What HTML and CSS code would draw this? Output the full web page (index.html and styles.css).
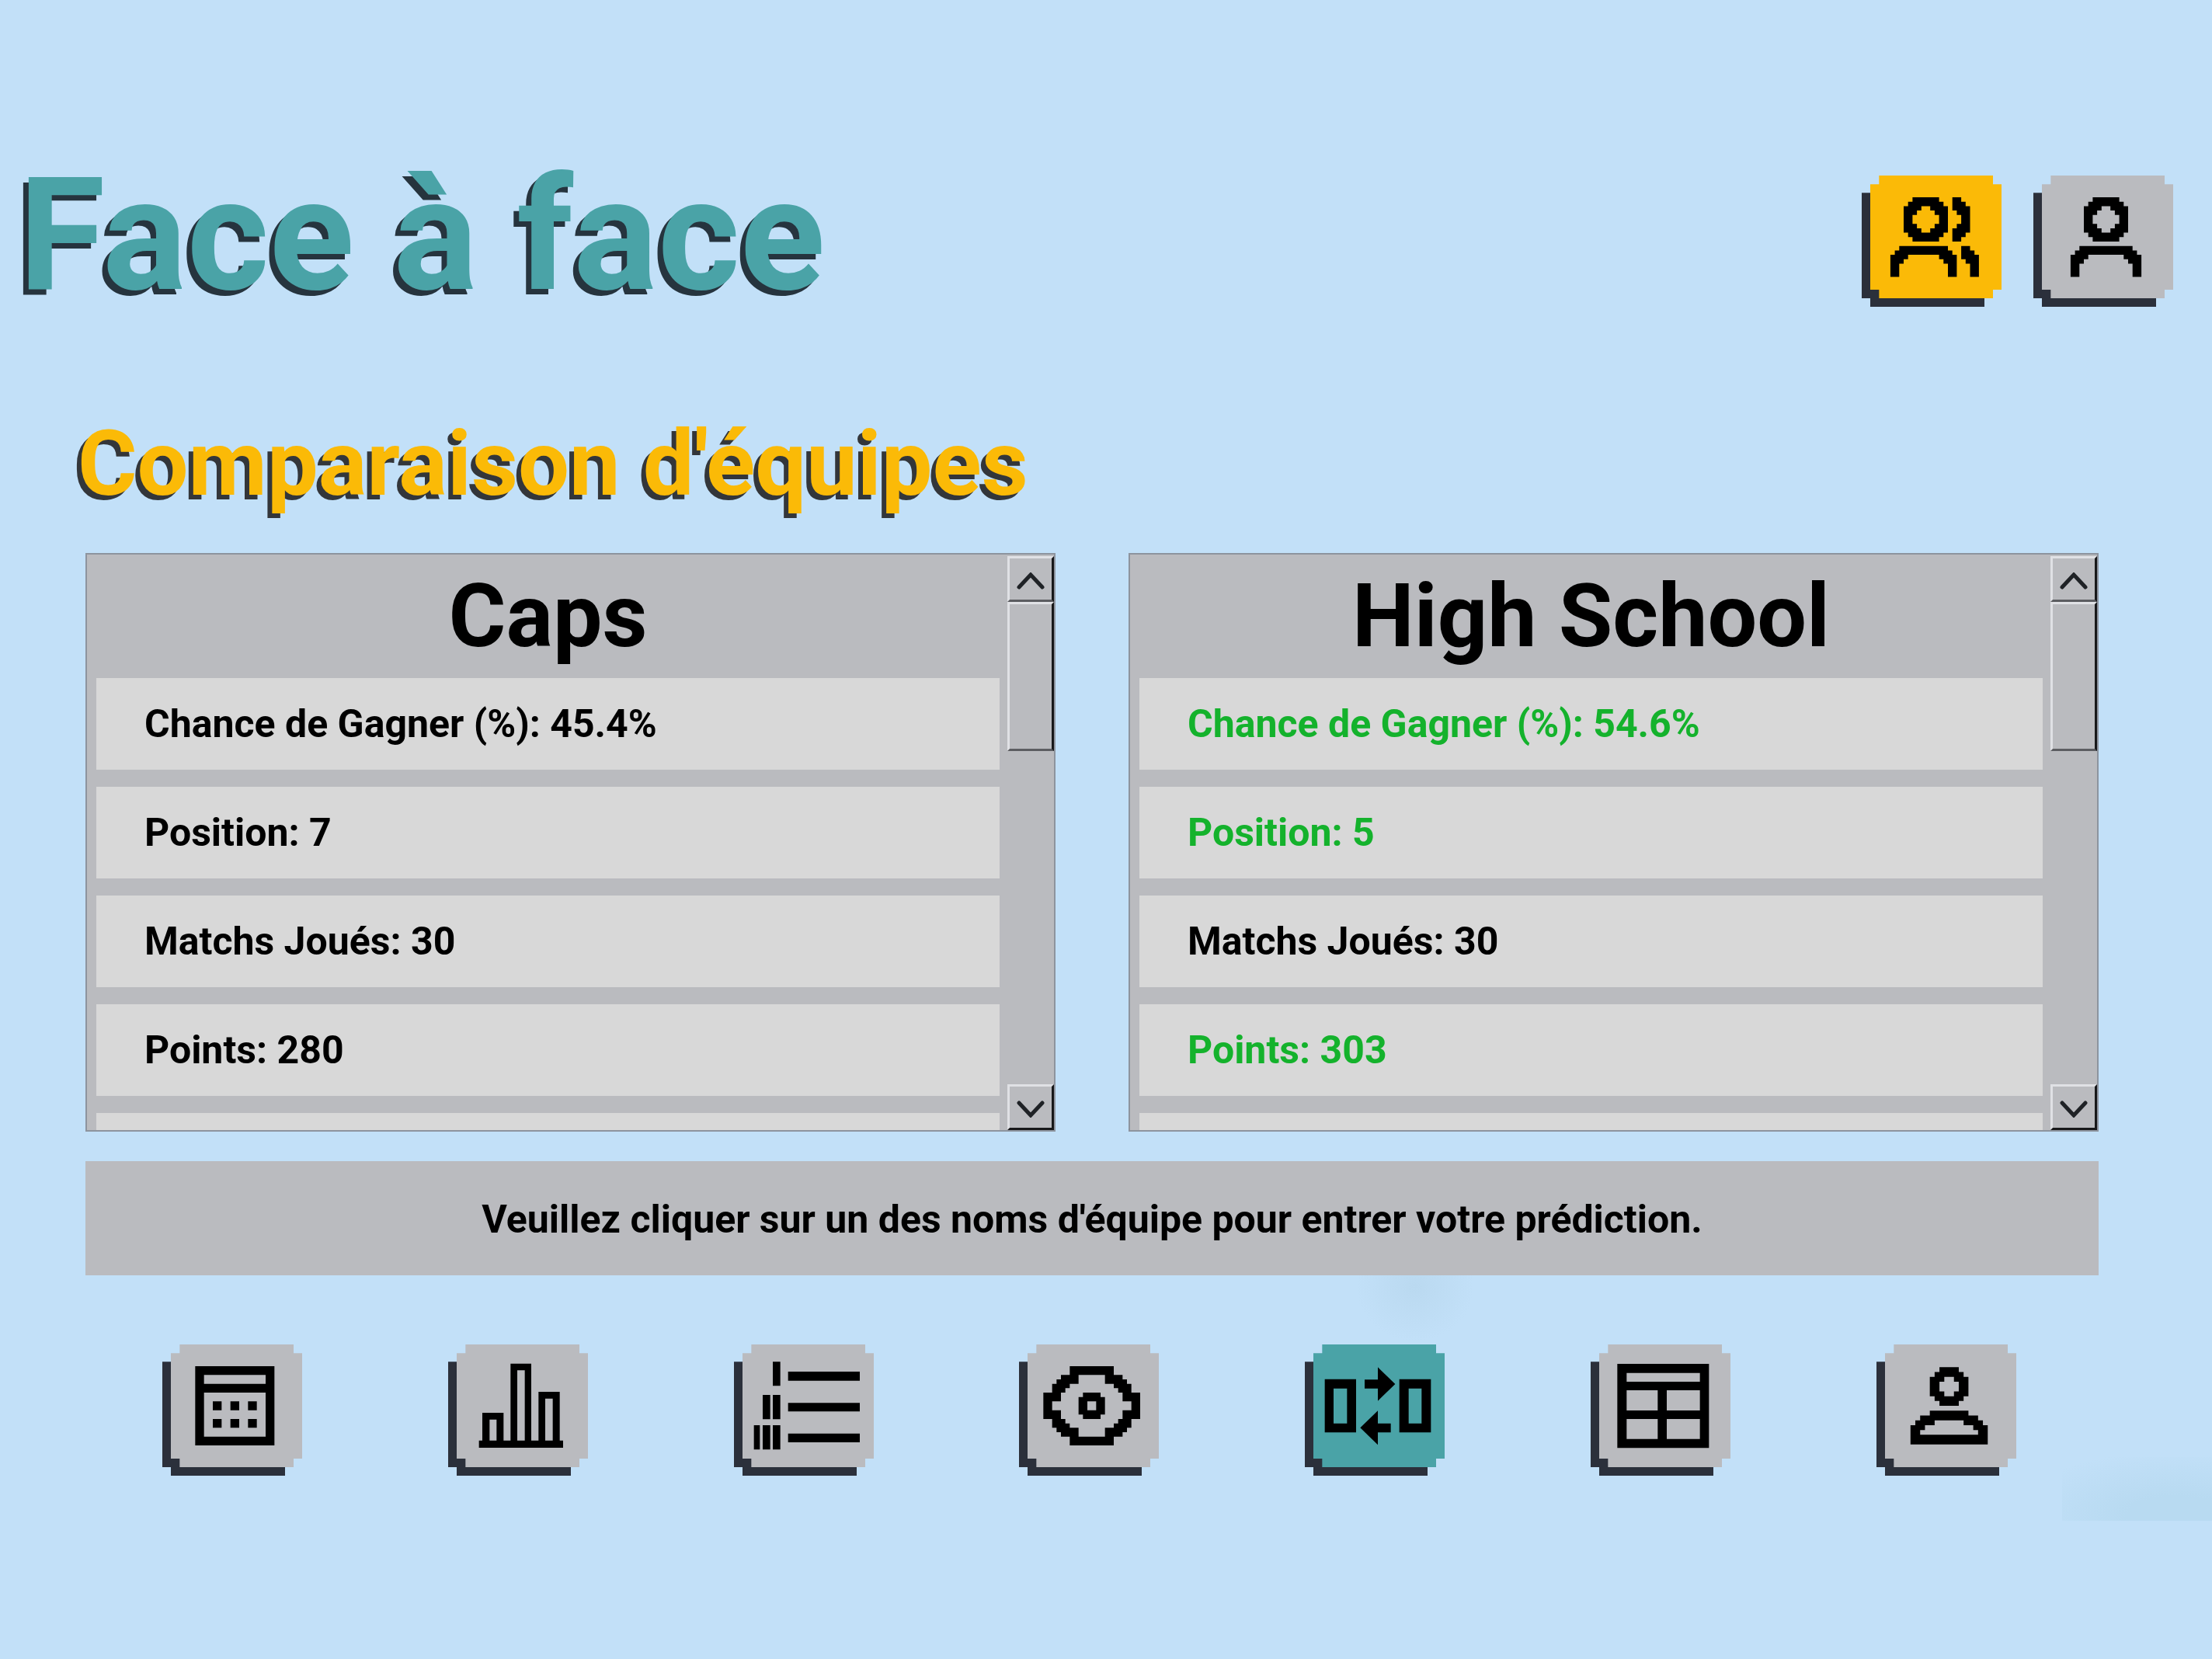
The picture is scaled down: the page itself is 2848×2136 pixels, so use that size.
FILE: index.html
```html
<!DOCTYPE html>
<html lang="fr">
<head>
<meta charset="utf-8">
<meta name="viewport" content="width=device-width, initial-scale=1">
<title>Face à face</title>
<link rel="stylesheet" href="styles.css">
</head>
<body>
<svg class="defs" aria-hidden="true">
  <symbol id="tile" viewBox="0 0 540 507">
    <path class="tile-shadow" d="M0 67H507V474H474V507H33V474H0Z"/>
    <path class="tile-face" d="M67 0H507V34H540V441H507V474H67V441H33V34H67Z"/>
  </symbol>
  <symbol id="chevron" viewBox="0 0 36 22">
    <path d="M3 19L18 3L33 19" fill="none" stroke="#1f2226" stroke-width="5" stroke-linecap="round"/>
  </symbol>
</svg>

<header class="header">
  <h1 class="title">Face à face</h1>
  <div class="modes">
    <button class="tile tile--gold" type="button" aria-label="Équipes" aria-pressed="true">
      <svg viewBox="0 0 540 507"><use href="#tile"/>
        <g transform="translate(162 84) scale(17.1)" fill-rule="evenodd">
          <path d="M2 0H8V1H9V2H10V8H9V9H8V10H2V9H1V8H0V2H1V1H2ZM4 2V3H3V4H2V6H3V7H4V8H6V7H7V6H8V4H7V3H6V2Z"/>
          <path d="M11 0H13V1H14V2H15V8H14V9H13V10H11V7H12V6H13V4H12V3H11Z"/>
          <path d="M-1 11H10V12H11V13H12V18H10V15H9V14H8V13H1V14H0V15H-1V18H-3V13H-2V12H-1Z"/>
          <path d="M13 11H15V12H16V13H17V18H15V15H14V14H13Z"/>
        </g>
      </svg>
    </button>
    <button class="tile" type="button" aria-label="Joueur" aria-pressed="false">
      <svg viewBox="0 0 540 507"><use href="#tile"/>
        <g transform="translate(195 84) scale(17.1)" fill-rule="evenodd">
          <path d="M2 0H8V1H9V2H10V8H9V9H8V10H2V9H1V8H0V2H1V1H2ZM4 2V3H3V4H2V6H3V7H4V8H6V7H7V6H8V4H7V3H6V2Z"/>
          <path d="M-1 11H11V12H12V13H13V18H11V15H10V14H9V13H1V14H0V15H-1V18H-3V13H-2V12H-1Z"/>
        </g>
      </svg>
    </button>
  </div>
</header>

<main>
  <h2 class="subtitle">Comparaison d'équipes</h2>
  <div class="content">
    <div class="panels">
      <section class="panel">
        <div class="panel-body">
          <h3><button class="team" type="button">Caps</button></h3>
          <ul class="stats">
            <li>Chance de Gagner (%): 45.4%</li>
            <li>Position: 7</li>
            <li>Matchs Joués: 30</li>
            <li>Points: 280</li>
            <li></li>
          </ul>
        </div>
        <div class="scrollbar">
          <button class="scroll-part" type="button" aria-label="Monter"><svg><use href="#chevron"/></svg></button>
          <div class="scroll-part scroll-thumb"></div>
          <button class="scroll-part scroll-down" type="button" aria-label="Descendre"><svg class="flip"><use href="#chevron"/></svg></button>
        </div>
      </section>
      <section class="panel">
        <div class="panel-body">
          <h3><button class="team" type="button">High School</button></h3>
          <ul class="stats">
            <li class="best">Chance de Gagner (%): 54.6%</li>
            <li class="best">Position: 5</li>
            <li>Matchs Joués: 30</li>
            <li class="best">Points: 303</li>
            <li></li>
          </ul>
        </div>
        <div class="scrollbar">
          <button class="scroll-part" type="button" aria-label="Monter"><svg><use href="#chevron"/></svg></button>
          <div class="scroll-part scroll-thumb"></div>
          <button class="scroll-part scroll-down" type="button" aria-label="Descendre"><svg class="flip"><use href="#chevron"/></svg></button>
        </div>
      </section>
    </div>
    <p class="notice">Veuillez cliquer sur un des noms d'équipe pour entrer votre prédiction.</p>
  </div>
</main>

<nav class="nav">
  <button class="tile" type="button" aria-label="Calendrier">
    <svg viewBox="0 0 540 507"><use href="#tile"/>
      <path transform="translate(127 84) scale(17)" fill-rule="evenodd" d="M0 0H18V18H0ZM2 2V4H16V2ZM2 6V16H16V6ZM4 8H6V10H4ZM8 8H10V10H8ZM12 8H14V10H12ZM4 12H6V14H4ZM8 12H10V14H8ZM12 12H14V14H12Z"/>
    </svg>
  </button>
  <button class="tile" type="button" aria-label="Statistiques">
    <svg viewBox="0 0 540 507"><use href="#tile"/>
      <path d="M119 371H132V264H214V371H241V74H321V371H349V183H431V371H444V399H119ZM160 290V371H187V290ZM267 100V371H296V100ZM375 209V371H404V209Z" fill-rule="evenodd"/>
    </svg>
  </button>
  <button class="tile" type="button" aria-label="Classement">
    <svg viewBox="0 0 540 507"><use href="#tile"/>
      <path d="M150 67H179V160H150ZM111 195H140V289H111ZM150 195H179V289H150ZM77 312H100V406H77ZM111 312H140V406H111ZM150 312H179V406H150ZM209 105H486V140H209ZM209 226H486V259H209ZM209 344H486V378H209Z"/>
    </svg>
  </button>
  <button class="tile" type="button" aria-label="Aperçu">
    <svg viewBox="0 0 540 507"><use href="#tile"/>
      <g transform="translate(94 84) scale(17)" fill-rule="evenodd">
        <path d="M6 0H16V2H18V3H19V4H20V6H22V12H20V14H19V15H18V16H16V18H6V16H4V15H3V14H2V12H0V6H2V4H3V3H4V2H6ZM8 2H14V4H16V5H17V6H18V8H20V10H18V12H17V13H16V14H14V16H8V14H6V13H5V12H4V10H2V8H4V6H5V5H6V4H8Z"/>
        <path d="M9 6H13V7H14V11H13V12H9V11H8V7H9ZM10 8V10H12V8Z"/>
      </g>
    </svg>
  </button>
  <button class="tile tile--teal" type="button" aria-label="Face à face" aria-current="page">
    <svg viewBox="0 0 540 507"><use href="#tile"/>
      <path fill-rule="evenodd" d="M77 134H198V340H77ZM111 170V305H163V170ZM365 134H487V340H365ZM401 170V305H451V170Z"/>
      <path d="M231 136H282V88L349 153L282 218V170H231ZM332 305V340H282V388L214 322L282 256V305Z"/>
    </svg>
  </button>
  <button class="tile" type="button" aria-label="Tableau">
    <svg viewBox="0 0 540 507"><use href="#tile"/>
      <path fill-rule="evenodd" d="M103 75H457V400H103ZM139 110V144H422V110ZM139 177V255H259V177ZM294 177V255H422V177ZM139 288V365H259V288ZM294 288V365H422V288Z"/>
    </svg>
  </button>
  <button class="tile" type="button" aria-label="Profil">
    <svg viewBox="0 0 540 507"><use href="#tile"/>
      <g transform="translate(206 88) scale(18.65)" fill-rule="evenodd">
        <path d="M2 0H6V1H7V2H8V6H7V7H6V8H2V7H1V6H0V2H1V1H2ZM3 2V3H2V5H3V6H5V5H6V3H5V2Z"/>
        <path d="M0 9H8V10H10V11H11V12H12V16H-4V12H-3V11H-2V10H0ZM1 11V12H-1V13H-2V14H10V13H9V12H7V11Z"/>
      </g>
    </svg>
  </button>
</nav>
</body>
</html>
```
FILE: styles.css
```css
* {
  box-sizing: border-box;
}

body {
  margin: 0;
  min-height: 100vh;
  color: #000;
  font-family: Roboto, "Liberation Sans", sans-serif;
  font-weight: 700;
  /* two faint smudges over the flat sky colour */
  background:
    radial-gradient(76px 70px at 50% 16%, #bad9f0, #bad9f000) 1746px 1642px / 152px 92px no-repeat,
    radial-gradient(210px 84px at 76% 92%, #b8daf1 30%, #b8daf100) 2655px 1876px / 193px 82px no-repeat,
    #c2e0f8;
}

h1,
h2,
h3,
p,
ul {
  margin: 0;
  padding: 0;
}

button {
  padding: 0;
  border: 0;
  background: none;
  color: inherit;
  font: inherit;
  cursor: pointer;
}

.defs {
  position: absolute;
  width: 0;
  height: 0;
}

.header {
  display: flex;
  justify-content: space-between;
  padding: 226px 50px 0 24px;
}

.title {
  color: #4aa3a7;
  font-size: 203px;
  line-height: 154px;
  text-shadow: -7px 7px 0 #26343e;
}

.modes {
  display: flex;
  gap: 41px;
}

.tile {
  --face: #babbbf;
  width: 180px;
  height: 169px;
}

.tile svg {
  display: block;
  width: 100%;
  height: 100%;
}

.tile--gold {
  --face: #fbba07;
}

.tile--teal {
  --face: #4aa3a7;
}

.tile-shadow {
  fill: #2b303b;
}

.tile-face {
  fill: var(--face);
}

.subtitle {
  margin-top: 144px;
  padding-left: 100px;
  color: #fbba07;
  font-size: 117px;
  line-height: 116px;
  text-shadow: -6px 6px 0 #33363a;
}

.content {
  display: grid;
  gap: 38px;
  margin-top: 57px;
  padding: 0 146px 0 110px;
}

.panels {
  display: grid;
  grid-template-columns: 1fr 1fr;
  gap: 94px;
}

.panel {
  display: grid;
  grid-template-columns: 1fr 60px;
  gap: 10px;
  height: 745px;
  padding-left: 12px;
  overflow: hidden;
  border: 2px solid #8d949e;
  background: #babbbf;
}

.panel-body {
  min-width: 0;
  min-height: 0;
  overflow: hidden;
}

.team {
  display: block;
  width: 100%;
  height: 159px;
  font-size: 113px;
  line-height: 156px;
}

.stats {
  display: grid;
  gap: 22px;
  list-style: none;
}

.stats li {
  height: 118px;
  padding-left: 62px;
  background: #d8d8d8;
  font-size: 50px;
  line-height: 118px;
}

.stats .best {
  color: #14b22c;
}

.scrollbar {
  display: flex;
  flex-direction: column;
  padding-top: 2px;
}

.scroll-part {
  display: grid;
  place-items: center;
  height: 59px;
  padding-top: 4px;
  border: 3px solid;
  border-color: #e0e1e5 #17181a #5c5d61 #e0e1e5;
}

.scroll-part svg {
  width: 36px;
  height: 22px;
}

.scroll-thumb {
  height: 192px;
}

.scroll-down {
  margin-top: auto;
  border-bottom-color: #17181a;
}

.flip {
  transform: rotate(180deg);
}

.notice {
  padding: 4px 24px 0;
  background: #babbbf;
  font-size: 50px;
  line-height: 143px;
  text-align: center;
}

.nav {
  display: flex;
  justify-content: space-between;
  margin-top: 89px;
  padding: 0 252px 0 209px;
}
```
